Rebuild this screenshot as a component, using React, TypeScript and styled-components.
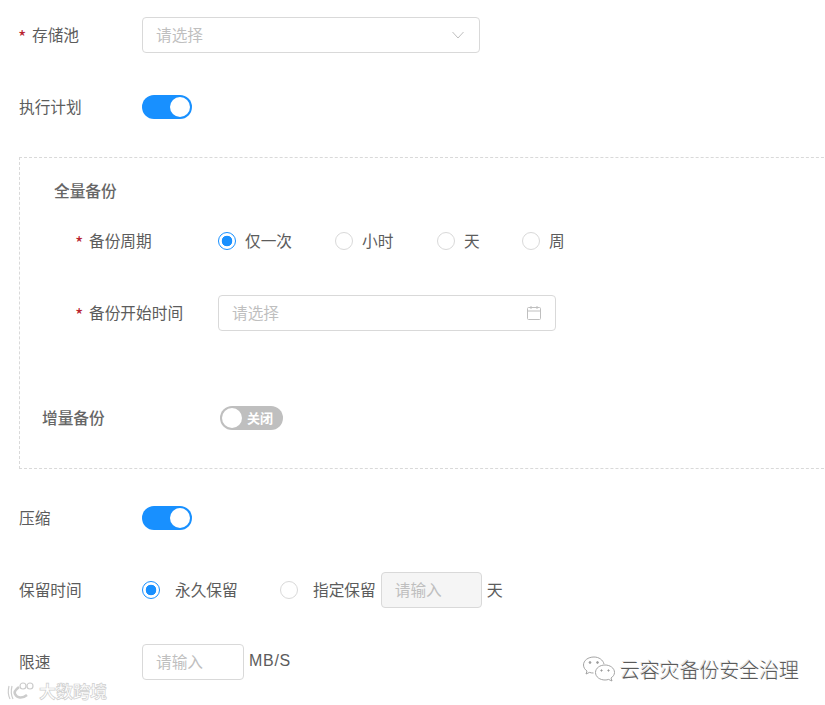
import React from "react";
import styled, { createGlobalStyle } from "styled-components";

const GlobalStyle = createGlobalStyle`
  html, body {
    margin: 0;
    padding: 0;
    background: #fff;
    overflow: hidden;
  }
  body {
    font-family: "Noto Sans CJK SC", "Liberation Sans", sans-serif;
    font-size: 15.7px;
    color: #5c5c5c;
  }
`;

function Chevron() {
  return (
    <svg width="14" height="14" viewBox="0 0 14 14" fill="none">
      <path d="M1.5 4 L7 10 L12.5 4" stroke="#bfbfbf" strokeWidth="1" />
    </svg>
  );
}

function CalendarIcon() {
  return (
    <svg width="14" height="14" viewBox="0 0 14 14" fill="none" stroke="#bfbfbf" strokeWidth="1">
      <rect x="0.5" y="1.5" width="13" height="12" rx="1" />
      <path d="M0.5 5 H13.5 M4 0 V3 M10 0 V3" />
    </svg>
  );
}

function Wechat() {
  return (
    <svg width="34" height="30" viewBox="0 0 34 30" fill="none" stroke="#9a9a9a" strokeWidth="0.9">
      <path d="M12 3 C6 3 1.5 6.5 1.5 11 C1.5 13.6 3 15.6 5 17 L4 20 L7.5 18.4 C9 18.9 10 19 11.5 19" />
      <path d="M12 3 C17 3 21 6 22 10" />
      <path d="M23 11 C18 11 13.5 14 13.5 18.5 C13.5 23 18 26 23 26 C24.5 26 25.5 25.8 26.5 25.4 L30 27 L29 24 C31 22.6 32.5 20.8 32.5 18.5 C32.5 14 28 11 23 11 Z" />
      <circle cx="8" cy="8.5" r="0.9" fill="#9a9a9a" />
      <circle cx="15.5" cy="8.5" r="0.9" fill="#9a9a9a" />
      <circle cx="19.5" cy="16.5" r="0.7" fill="#9a9a9a" />
      <circle cx="26.5" cy="16.5" r="0.7" fill="#9a9a9a" />
    </svg>
  );
}

function KooLogo() {
  return (
    <svg width="32" height="20" viewBox="0 0 32 20" fill="none" stroke="#cccccc">
      <path d="M3 5 C2 9 2 14 4 18 M6 5 C5 9 5 14 7 18" strokeWidth="1.2" />
      <path d="M13 6 C9 9 8 11 9 13 C11 17 16 18 21 14" strokeWidth="2.6" />
      <circle cx="17" cy="5" r="3" strokeWidth="1.2" />
      <circle cx="24" cy="5" r="3" strokeWidth="1.2" />
    </svg>
  );
}

export default function App() {
  return (
    <Page>
      <GlobalStyle />
      <Row>
        <Label required>存储池</Label>
        <Field width={338}>
          <Placeholder>请选择</Placeholder>
          <Chevron />
        </Field>
      </Row>
      <Row>
        <Label>执行计划</Label>
        <Switch />
      </Row>
      <DashedBox>
        <SectionTitle>全量备份</SectionTitle>
        <SubRow>
          <SubLabel required>备份周期</SubLabel>
          <RadioGroup>
            <RadioItem width={117}>
              <Radio checked />
              <Text>仅一次</Text>
            </RadioItem>
            <RadioItem width={102}>
              <Radio />
              <Text>小时</Text>
            </RadioItem>
            <RadioItem width={85}>
              <Radio />
              <Text>天</Text>
            </RadioItem>
            <RadioItem>
              <Radio />
              <Text>周</Text>
            </RadioItem>
          </RadioGroup>
        </SubRow>
        <SubRow>
          <SubLabel required>备份开始时间</SubLabel>
          <Field width={338}>
            <Placeholder>请选择</Placeholder>
            <CalendarIcon />
          </Field>
        </SubRow>
        <IncrementRow>
          <IncrementLabel>增量备份</IncrementLabel>
          <OffSwitch>
            <Knob />
            <OffText>关闭</OffText>
          </OffSwitch>
        </IncrementRow>
      </DashedBox>
      <Row>
        <Label>压缩</Label>
        <Switch />
      </Row>
      <Row>
        <Label>保留时间</Label>
        <RetainOption>
          <Radio checked />
          <Text>永久保留</Text>
        </RetainOption>
        <Radio />
        <RetainCustom>指定保留</RetainCustom>
        <Field width={101} disabled>
          <Placeholder>请输入</Placeholder>
        </Field>
        <Unit>天</Unit>
      </Row>
      <Row>
        <Label>限速</Label>
        <Field width={102}>
          <Placeholder>请输入</Placeholder>
        </Field>
        <Unit>MB/S</Unit>
      </Row>
      <Signature>
        <Wechat />
        <SignatureText>云容灾备份安全治理</SignatureText>
      </Signature>
      <Watermark>
        <KooLogo />
        <WatermarkText>大数跨境</WatermarkText>
      </Watermark>
    </Page>
  );
}

const Page = styled.div`
  position: relative;
  width: 825px;
  height: 705px;
  box-sizing: border-box;
  padding: 17px 0 0 19px;
  overflow: hidden;
`;

const Row = styled.div`
  display: flex;
  align-items: center;
  height: 36px;
  margin-bottom: 36px;
`;

const Text = styled.span`
  padding-bottom: 2px;
  white-space: nowrap;
`;

const Label = styled.div<{ required?: boolean }>`
  width: 123px;
  flex: none;
  padding-bottom: 2px;
  white-space: nowrap;
  &::before {
    content: ${({ required }) => (required ? '"*"' : "none")};
    color: #b8232f;
    display: inline-block;
    width: 13px;
    margin-left: -1px;
    margin-right: 1px;
    font-size: 18px;
    line-height: 1;
    vertical-align: -3px;
  }
`;

const Field = styled.div<{ width: number; disabled?: boolean }>`
  width: ${({ width }) => width}px;
  height: 36px;
  flex: none;
  box-sizing: border-box;
  display: flex;
  align-items: center;
  justify-content: space-between;
  padding: 0 14px 0 13px;
  border: 1px solid #d9d9d9;
  border-radius: 4px;
  background: ${({ disabled }) => (disabled ? "#f5f5f5" : "#fff")};
`;

const Placeholder = styled.span`
  padding-bottom: 2px;
  color: #bfbfbf;
`;

const Switch = styled.div`
  position: relative;
  width: 50px;
  height: 24px;
  border-radius: 12px;
  background: #1890ff;
  &::after {
    content: "";
    position: absolute;
    top: 2px;
    right: 2px;
    width: 20px;
    height: 20px;
    border-radius: 50%;
    background: #fff;
  }
`;

const DashedBox = styled.div`
  width: 830px;
  height: 312px;
  box-sizing: border-box;
  margin: -4px 0 31px;
  border: 1px dashed #d9d9d9;
  padding-top: 22px;
`;

const SectionTitle = styled.div`
  margin-left: 34px;
  line-height: 22px;
  font-weight: 500;
  color: #666;
`;

const SubRow = styled.div`
  display: flex;
  align-items: center;
  height: 36px;
  margin: 21px 0 36px;
  padding-left: 56px;
  & + & {
    margin-top: 0;
  }
`;

const SubLabel = styled(Label)`
  width: 142px;
`;

const RadioGroup = styled.div`
  display: flex;
  align-items: center;
`;

const RadioItem = styled.div<{ width?: number }>`
  display: flex;
  align-items: center;
  gap: 9px;
  width: ${({ width }) => (width ? `${width}px` : "auto")};
  flex: none;
`;

const Radio = styled.span<{ checked?: boolean }>`
  width: 18px;
  height: 18px;
  flex: none;
  box-sizing: border-box;
  border-radius: 50%;
  border: 1px solid ${({ checked }) => (checked ? "#1890ff" : "#d9d9d9")};
  background: ${({ checked }) =>
    checked ? "radial-gradient(circle, #1890ff 0 5px, #fff 5.6px)" : "#fff"};
`;

const IncrementRow = styled.div`
  display: flex;
  align-items: center;
  height: 36px;
  margin-top: 69px;
  padding-left: 22px;
`;

const IncrementLabel = styled.div`
  width: 178px;
  flex: none;
  padding-bottom: 2px;
  font-weight: 500;
  color: #666;
`;

const OffSwitch = styled.div`
  display: flex;
  align-items: center;
  width: 63px;
  height: 24px;
  box-sizing: border-box;
  padding-left: 2px;
  gap: 5px;
  border-radius: 12px;
  background: #bfbfbf;
`;

const Knob = styled.span`
  width: 20px;
  height: 20px;
  flex: none;
  border-radius: 50%;
  background: #fff;
`;

const OffText = styled.span`
  padding-bottom: 2px;
  color: #fff;
  font-size: 13px;
  font-weight: 700;
`;

const RetainOption = styled.div`
  display: flex;
  align-items: center;
  gap: 15px;
  width: 138px;
  flex: none;
`;

const RetainCustom = styled(Text)`
  margin: 0 5px 0 15px;
`;

const Unit = styled.span`
  margin-left: 5px;
  padding-bottom: 2px;
  font-size: 16px;
  letter-spacing: 0.7px;
  font-family: "Liberation Sans", "Noto Sans CJK SC", sans-serif;
`;

const Signature = styled.div`
  position: absolute;
  left: 582px;
  top: 654px;
  display: flex;
  align-items: center;
  gap: 4px;
`;

const SignatureText = styled.span`
  font-size: 19.9px;
  font-weight: 300;
  color: #5a5a5a;
  text-shadow: -1px -1px 0 #e2e2e2;
`;

const Watermark = styled.div`
  position: absolute;
  left: 6px;
  top: 678px;
  display: flex;
  align-items: center;
  gap: 1px;
`;

const WatermarkText = styled.span`
  font-size: 17px;
  font-weight: 700;
  color: #fff;
  -webkit-text-stroke: 0.7px #cfcfcf;
`;
